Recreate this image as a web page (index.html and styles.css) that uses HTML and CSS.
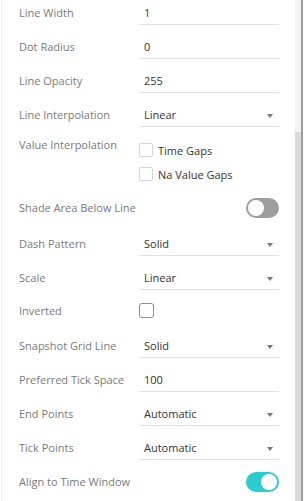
FILE: index.html
```html
<!doctype html>
<html lang="en">
    <head>
        <meta charset="UTF-8" />
        <meta name="viewport" content="width=device-width, initial-scale=1.0" />
        <title>Line Settings</title>
        <link rel="stylesheet" href="styles.css">
    </head>
    <body>
        <div class="frame">
            <div class="panel">
                <div class="row">
                    <span class="label">Line Width</span>
                    <div class="field">1</div>
                </div>
                <div class="row">
                    <span class="label">Dot Radius</span>
                    <div class="field">0</div>
                </div>
                <div class="row">
                    <span class="label">Line Opacity</span>
                    <div class="field">255</div>
                </div>
                <div class="row">
                    <span class="label">Line Interpolation</span>
                    <div class="field select">Linear<span class="caret"></span></div>
                </div>
                <div class="multi">
                    <span class="label">Value Interpolation</span>
                    <div class="options">
                        <label class="option"><span class="box light"></span>Time Gaps</label>
                        <label class="option"><span class="box light"></span>Na Value Gaps</label>
                    </div>
                </div>
                <div class="toggle-row">
                    <span class="label">Shade Area Below Line</span>
                    <span class="toggle"></span>
                </div>
                <div class="row">
                    <span class="label">Dash Pattern</span>
                    <div class="field select">Solid<span class="caret"></span></div>
                </div>
                <div class="row">
                    <span class="label">Scale</span>
                    <div class="field select">Linear<span class="caret"></span></div>
                </div>
                <div class="check-row">
                    <span class="label">Inverted</span>
                    <span class="box"></span>
                </div>
                <div class="row">
                    <span class="label">Snapshot Grid Line</span>
                    <div class="field select">Solid<span class="caret"></span></div>
                </div>
                <div class="row">
                    <span class="label">Preferred Tick Space</span>
                    <div class="field">100</div>
                </div>
                <div class="row">
                    <span class="label">End Points</span>
                    <div class="field select">Automatic<span class="caret"></span></div>
                </div>
                <div class="row">
                    <span class="label">Tick Points</span>
                    <div class="field select">Automatic<span class="caret"></span></div>
                </div>
                <div class="toggle-row">
                    <span class="label">Align to Time Window</span>
                    <span class="toggle on"></span>
                </div>
            </div>
            <div class="scrollbar"><div class="thumb"></div></div>
            <div class="edge"></div>
        </div>
    </body>
</html>
```

FILE: styles.css
```css
html,
body {
    margin: 0;
    height: 100%;
    background: #fff;
}
body {
    font-family: "Open Sans", Arial, sans-serif;
    font-size: 11px;
    color: #333;
    overflow: hidden;
}
.frame {
    display: flex;
    height: 501px;
    width: 303px;
    padding-left: 1px;
    box-sizing: border-box;
}
.panel {
    flex: 1;
    border-left: 1px solid #eeeeee;
    padding-left: 17px;
    padding-right: 16px;
}
.label {
    width: 120px;
    flex: none;
    color: #7a7a7a;
    line-height: 16px;
    white-space: nowrap;
}
.row {
    display: flex;
    align-items: flex-start;
    height: 34px;
    padding-top: 2px;
    box-sizing: border-box;
}
.row .label {
    margin-top: 3px;
}
.field {
    flex: 1;
    position: relative;
    height: 22px;
    line-height: 22px;
    padding-left: 5px;
    border-bottom: 1px solid #e2e2e2;
    color: #333;
}
.caret {
    position: absolute;
    right: 6px;
    top: 10px;
    border-left: 3.5px solid transparent;
    border-right: 3.5px solid transparent;
    border-top: 4px solid #777;
}
.multi {
    display: flex;
    align-items: flex-start;
    padding-top: 2px;
    padding-bottom: 9px;
}
.multi .label {
    line-height: 14px;
}
.options {
    display: flex;
    flex-direction: column;
}
.option {
    display: flex;
    align-items: center;
    height: 24px;
    color: #333;
}
.box {
    width: 14px;
    height: 14px;
    border: 1px solid #8c8c8c;
    border-radius: 3px;
    box-sizing: border-box;
    flex: none;
    background: #fff;
}
.box.light {
    border-color: #d4d4d4;
    border-radius: 2px;
    margin-right: 5px;
}
.check-row {
    display: flex;
    align-items: flex-start;
    height: 34px;
    padding-top: 4px;
    box-sizing: border-box;
}
.check-row .box {
    width: 15px;
    height: 15px;
}
.toggle-row {
    display: flex;
    align-items: center;
    justify-content: space-between;
    height: 26px;
    margin-bottom: 10px;
}
.toggle {
    position: relative;
    width: 33px;
    height: 20px;
    border-radius: 10px;
    background: #9e9e9e;
}
.toggle::after {
    content: "";
    position: absolute;
    left: 2px;
    top: 2px;
    width: 16px;
    height: 16px;
    border-radius: 50%;
    background: #fff;
}
.toggle.on {
    background: #2ccbce;
}
.toggle.on::after {
    left: 15px;
}
.scrollbar {
    width: 6px;
    flex: none;
    background: #f3f3f3;
    position: relative;
}
.thumb {
    position: absolute;
    left: 0;
    right: 0;
    top: 132px;
    bottom: 0;
    background: #dadada;
}
.edge {
    width: 2px;
    flex: none;
    background: #9c9c9c;
}
```
